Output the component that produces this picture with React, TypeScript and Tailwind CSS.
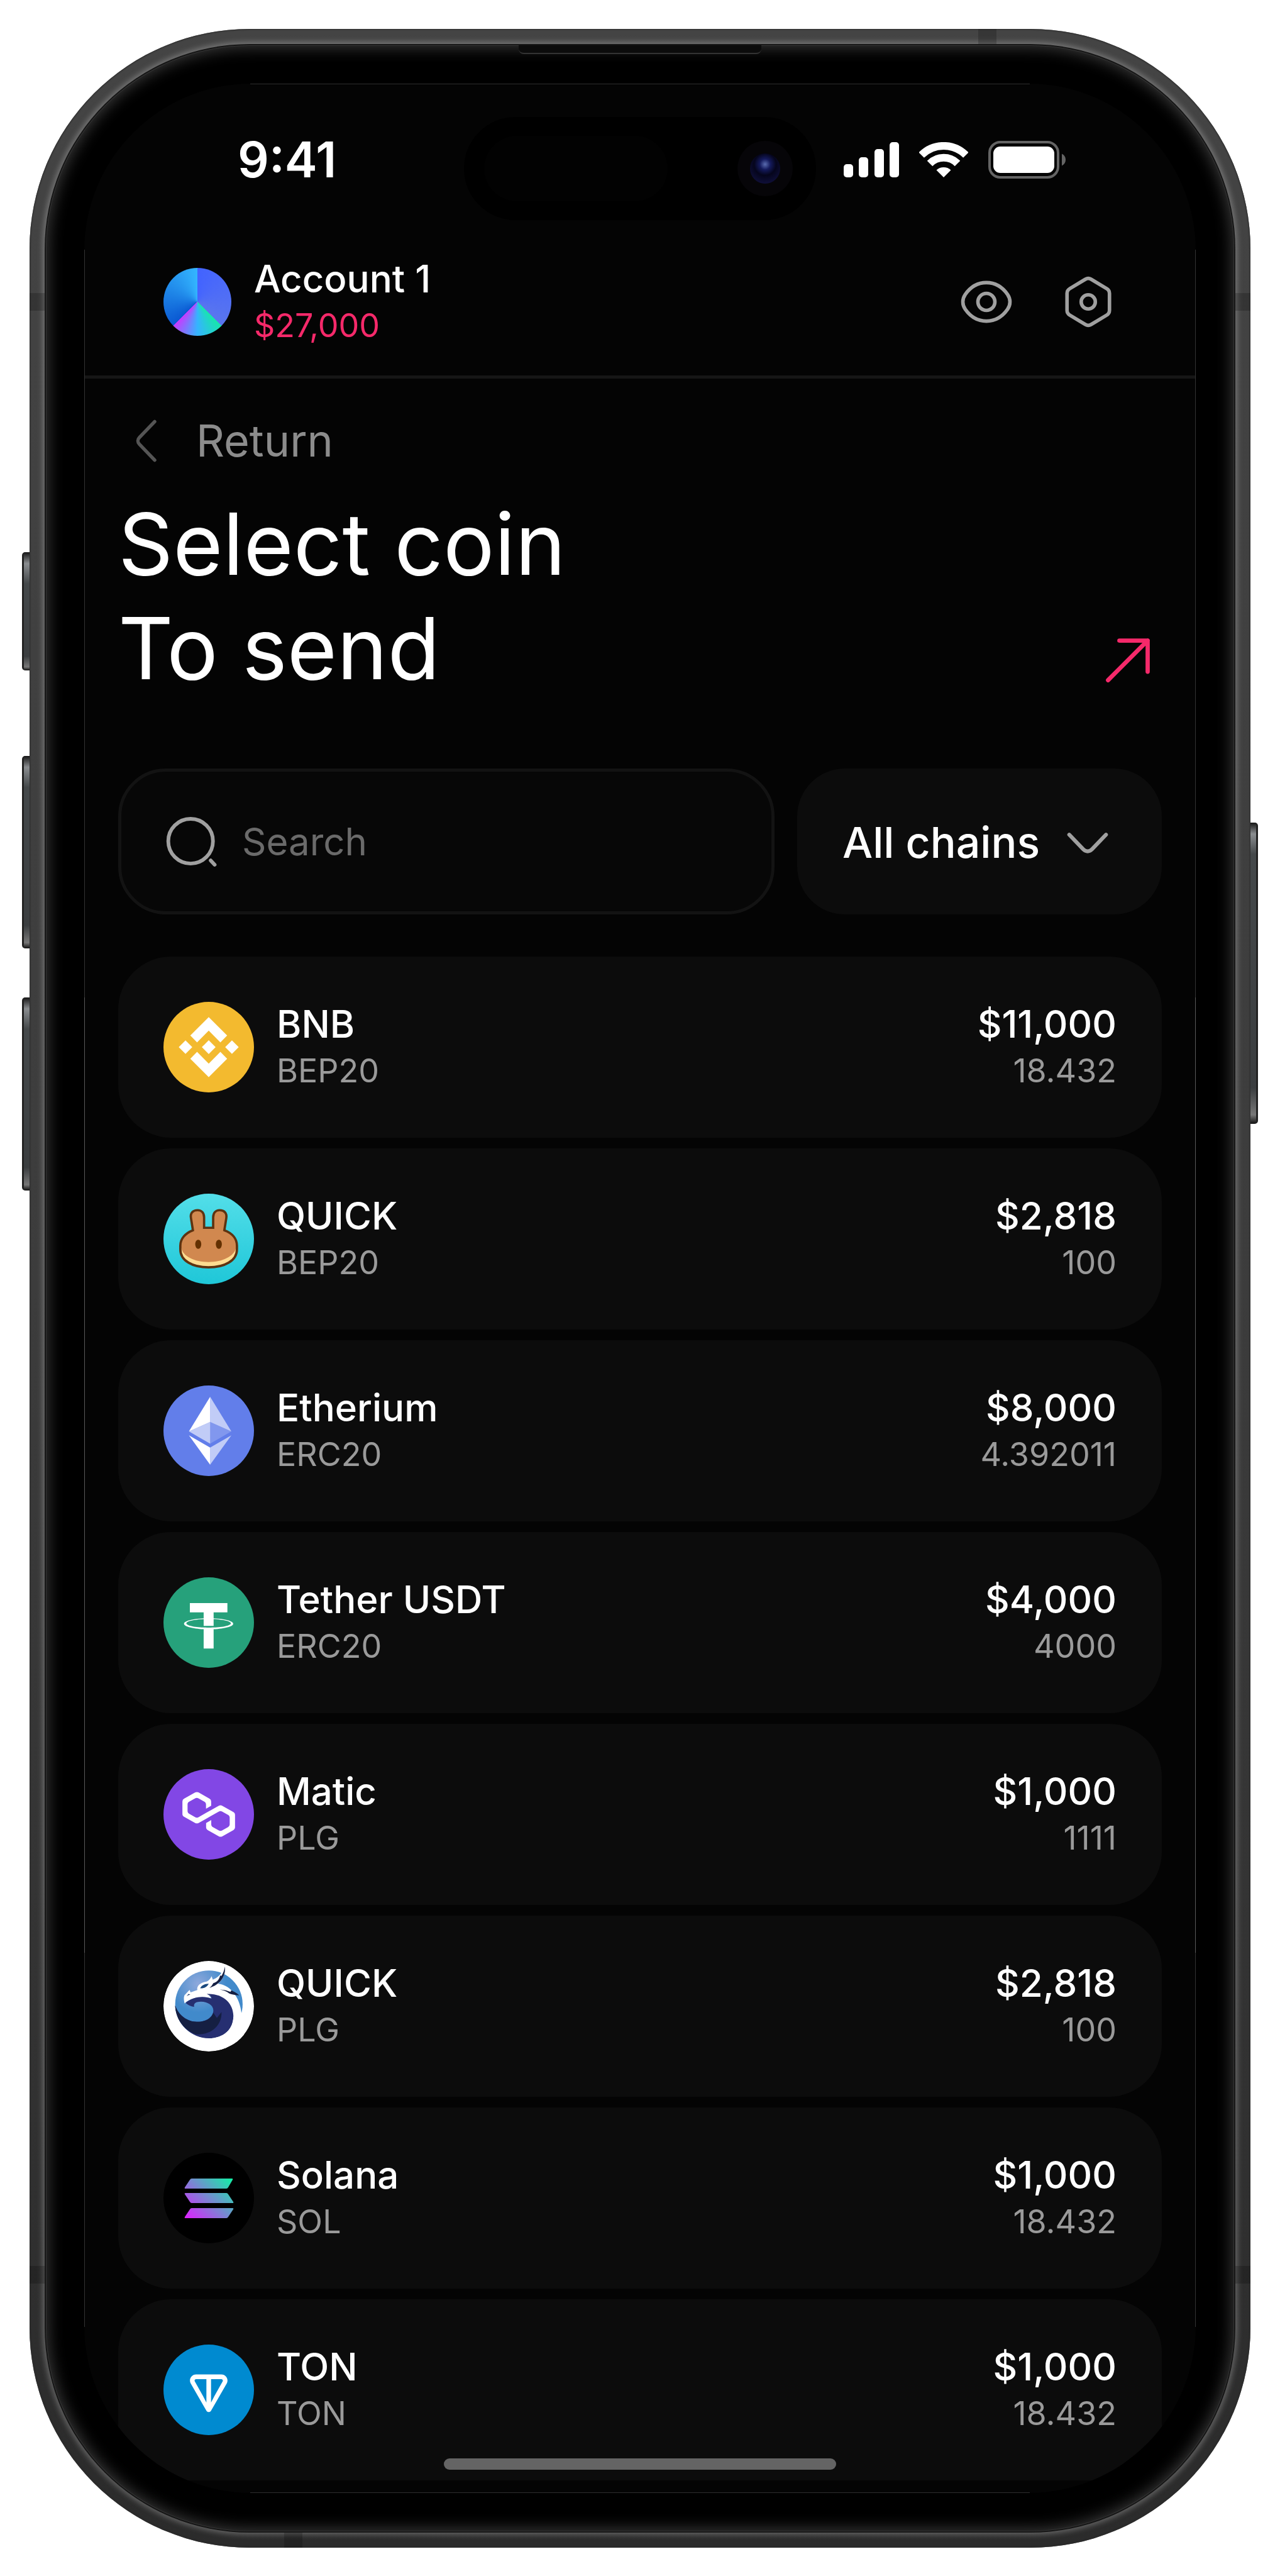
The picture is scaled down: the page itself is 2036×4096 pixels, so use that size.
import type { ReactNode } from "react"

type Coin = {
  name: string
  network: string
  value: string
  amount: string
  logo: ReactNode
}

function BnbLogo() {
  return (
    <svg viewBox="0 0 32 32" className="size-full" aria-hidden>
      <circle cx="16" cy="16" r="16" fill="#f3ba2f" />
      <path
        transform="translate(-.96 -.96) scale(1.06)"
        fill="#fff"
        d="M12.116 14.404L16 10.52l3.886 3.886 2.26-2.26L16 6l-6.144 6.144 2.26 2.26zM6 16l2.26-2.26L10.52 16l-2.26 2.26L6 16zm6.116 1.596L16 21.48l3.886-3.886 2.26 2.259L16 26l-6.144-6.144-.003-.003 2.263-2.257zM21.48 16l2.26-2.26L26 16l-2.26 2.26L21.48 16zm-3.188-.002h.002V16L16 18.294l-2.291-2.29-.004-.004.004-.003.401-.402.195-.195L16 13.706l2.293 2.293z"
      />
    </svg>
  )
}

function PancakeLogo() {
  return (
    <svg viewBox="51 42 510 510" className="size-full" aria-hidden>
      <defs>
        <linearGradient id="pancake-bg" x1="0" y1="0" x2="0" y2="1">
          <stop offset="0" stopColor="#53dee9" />
          <stop offset="1" stopColor="#1fc7d8" />
        </linearGradient>
      </defs>
      <circle cx="306" cy="297" r="255" fill="url(#pancake-bg)" />
      <path
        d="M217 248 L206 180 C200 148 220 135 243 135 C267 135 280 152 280 176 L280 234 L331 234 L331 176 C331 152 344 135 368 135 C392 135 410 150 405 180 L394 248 C438 264 465 295 465 335 L465 355 C465 420 395 457 305 457 C215 457 146 420 146 355 L146 335 C146 295 175 264 217 248Z"
        fill="#d1884f"
      />
      <path d="M150 345 C160 395 225 427 305 427 C385 427 450 395 461 345 L461 360 C457 416 393 453 305 453 C217 453 153 416 150 360Z" fill="#fedc90" />
      <path
        d="M217 248 L206 180 C200 148 220 135 243 135 C267 135 280 152 280 176 L280 234 L331 234 L331 176 C331 152 344 135 368 135 C392 135 410 150 405 180 L394 248 C438 264 465 295 465 335 L465 355 C465 420 395 457 305 457 C215 457 146 420 146 355 L146 335 C146 295 175 264 217 248Z"
        fill="none"
        stroke="#5f3310"
        strokeWidth="13"
      />
      <ellipse cx="247" cy="327" rx="17" ry="26" fill="#633001" />
      <ellipse cx="363" cy="327" rx="17" ry="26" fill="#633001" />
    </svg>
  )
}

function EthLogo() {
  return (
    <svg viewBox="0 0 32 32" className="size-full" aria-hidden>
      <circle cx="16" cy="16" r="16" fill="#627eea" />
      <g fill="#fff">
        <path fillOpacity=".602" d="M16.498 4v8.87l7.497 3.35z" />
        <path d="M16.498 4L9 16.22l7.498-3.35z" />
        <path fillOpacity=".602" d="M16.498 21.968v6.027L24 17.616z" />
        <path d="M16.498 27.995v-6.028L9 17.616z" />
        <path fillOpacity=".2" d="M16.498 20.573l7.497-4.353-7.497-3.348z" />
        <path fillOpacity=".602" d="M9 16.22l7.498 4.353v-7.701z" />
      </g>
    </svg>
  )
}

function TetherLogo() {
  return (
    <svg viewBox="0 0 32 32" className="size-full" aria-hidden>
      <circle cx="16" cy="16" r="16" fill="#26a17b" />
      <path
        transform="translate(1.6 2.1) scale(.9)"
        fill="#fff"
        d="M17.922 17.383v-.002c-.11.008-.677.042-1.942.042-1.01 0-1.721-.03-1.971-.042v.003c-3.888-.171-6.79-.848-6.79-1.658 0-.809 2.902-1.486 6.79-1.66v2.644c.254.018.982.061 1.988.061 1.207 0 1.812-.05 1.925-.06v-2.643c3.88.173 6.775.85 6.775 1.658 0 .81-2.895 1.485-6.775 1.657m0-3.59v-2.366h5.414V7.819H8.595v3.608h5.414v2.365c-4.4.202-7.709 1.074-7.709 2.118 0 1.044 3.309 1.915 7.709 2.116v7.582h3.913v-7.584c4.393-.202 7.694-1.073 7.694-2.116 0-1.043-3.301-1.914-7.694-2.117"
      />
    </svg>
  )
}

function MaticLogo() {
  return (
    <svg viewBox="0 0 32 32" className="size-full" aria-hidden>
      <circle cx="16" cy="16" r="16" fill="#8247e5" />
      <path
        transform="translate(1.12 1.12) scale(.93)"
        fill="#fff"
        d="M21.092 12.693c-.369-.215-.848-.215-1.254 0l-2.879 1.654-1.955 1.078-2.879 1.653c-.369.216-.848.216-1.254 0l-2.288-1.294c-.369-.215-.627-.61-.627-1.042V12.19c0-.431.221-.826.627-1.042l2.25-1.258c.37-.216.85-.216 1.256 0l2.25 1.258c.37.216.628.611.628 1.042v1.654l1.955-1.115v-1.653a1.16 1.16 0 00-.627-1.042l-4.17-2.372c-.369-.216-.848-.216-1.254 0l-4.244 2.372A1.16 1.16 0 006 11.076v4.78c0 .432.221.827.627 1.043l4.244 2.372c.369.215.849.215 1.254 0l2.879-1.618 1.955-1.114 2.879-1.617c.369-.216.848-.216 1.254 0l2.251 1.258c.37.215.627.61.627 1.042v2.552c0 .431-.22.826-.627 1.042l-2.25 1.294c-.37.216-.85.216-1.255 0l-2.251-1.258c-.37-.216-.628-.611-.628-1.042v-1.654l-1.955 1.115v1.653c0 .431.221.827.627 1.042l4.244 2.372c.369.216.848.216 1.254 0l4.244-2.372c.369-.215.627-.61.627-1.042v-4.78a1.16 1.16 0 00-.627-1.042l-4.28-2.409z"
      />
    </svg>
  )
}

function QuickLogo() {
  return (
    <svg viewBox="81 104 510 510" className="size-full" aria-hidden>
      <defs>
        <radialGradient id="quick-shine" cx=".34" cy=".2" r=".42">
          <stop offset="0" stopColor="#8fa9dc" />
          <stop offset="1" stopColor="#418acb" />
        </radialGradient>
        <clipPath id="quick-disc">
          <circle cx="336" cy="359" r="255" />
        </clipPath>
      </defs>
      <g clipPath="url(#quick-disc)">
        <circle cx="336" cy="359" r="255" fill="#fff" />
        <circle cx="337" cy="348" r="190" fill="url(#quick-shine)" />
        {/* white dragon body, head and horn */}
        <path
          fill="#fff"
          d="M200 343 C196 325 194 312 199 298 L228 267 L234 281 L272 268 C266 245 290 225 325 220 C338 214 346 204 352 190 L359 209 C385 200 404 185 427 136 C432 180 410 215 388 232 C450 236 512 300 521 402 L560 450 L520 560 L400 600 L330 560 L475 415 L330 290 L352 316 C310 300 240 305 200 343Z"
        />
        <path
          fill="#262f71"
          d="M206 340 C250 302 310 300 352 316 C350 304 342 296 324 290 C420 285 475 345 475 415 C475 490 420 540 337 540 C240 540 150 460 147 355 C165 410 215 447 268 447 C330 447 362 415 362 382 C362 345 310 325 270 336 C256 341 250 350 255 362 C235 360 215 350 206 340Z"
        />
        <path fill="#fff" d="M475 415 C475 490 420 540 337 540 L337 560 L420 560 L500 490Z" />
        <path fill="#151f42" d="M147 355 C165 410 215 447 268 447 C325 447 352 425 362 395 L382 425 L408 392 C412 470 345 525 262 517 C195 492 150 430 147 355Z" />
        <path fill="#151f42" d="M427 136 C434 190 400 238 340 256 C352 246 356 240 362 229 C385 222 396 206 400 186 L408 188 C418 172 424 155 427 136Z" />
        <path fill="#19477d" d="M288 258 C292 244 312 232 336 232 C328 248 310 260 288 258Z" />
        <path fill="#151f42" d="M398 265 C425 266 440 272 458 278 L464 270 C480 278 492 284 508 298 C480 296 455 292 442 280 C428 272 414 268 398 265Z" />
        <path fill="#1d3c70" d="M211 303 L222 290 L233 294 C224 294 218 298 211 303Z" />
      </g>
    </svg>
  )
}

function SolanaLogo() {
  return (
    <svg viewBox="0 0 144 144" className="size-full" aria-hidden>
      <defs>
        <linearGradient id="sol" gradientUnits="userSpaceOnUse" x1="38" y1="108" x2="106" y2="38">
          <stop offset="0" stopColor="#e01fff" />
          <stop offset="1" stopColor="#12f0a6" />
        </linearGradient>
      </defs>
      <circle cx="72" cy="72" r="72" fill="#000" />
      <g fill="url(#sol)">
        <path d="M45 41h64q2 0 1 2l-7 12q-1 2-3 2H35q-2 0-1-2l8-12q1-2 3-2z" />
        <path d="M35 64h65q2 0 3 2l8 12q1 2-1 2H45q-2 0-3-2l-8-12q-1-2 1-2z" />
        <path d="M45 88h65q2 0 1 2l-8 12q-1 2-3 2H35q-2 0-1-2l8-12q1-2 3-2z" />
      </g>
    </svg>
  )
}

function TonLogo() {
  return (
    <svg viewBox="0 0 56 56" className="size-full" aria-hidden>
      <circle cx="28" cy="28" r="28" fill="#008ad0" />
      <path
        transform="translate(5.04 5.7) scale(.82)"
        fill="#fff"
        d="M37.56 15.63H18.44C14.92 15.63 12.7 19.42 14.46 22.48L26.26 42.94C27.03 44.28 28.97 44.28 29.74 42.94L41.55 22.48C43.31 19.43 41.08 15.63 37.57 15.63H37.56ZM26.25 36.81L23.68 31.83L17.48 20.74C17.07 20.03 17.57 19.12 18.44 19.12H26.25V36.81ZM38.52 20.74L32.32 31.84L29.75 36.81V19.12H37.56C38.43 19.12 38.93 20.03 38.52 20.74Z"
      />
    </svg>
  )
}

const coins: Coin[] = [
  { name: "BNB", network: "BEP20", value: "$11,000", amount: "18.432", logo: <BnbLogo /> },
  { name: "QUICK", network: "BEP20", value: "$2,818", amount: "100", logo: <PancakeLogo /> },
  { name: "Etherium", network: "ERC20", value: "$8,000", amount: "4.392011", logo: <EthLogo /> },
  { name: "Tether USDT", network: "ERC20", value: "$4,000", amount: "4000", logo: <TetherLogo /> },
  { name: "Matic", network: "PLG", value: "$1,000", amount: "1111", logo: <MaticLogo /> },
  { name: "QUICK", network: "PLG", value: "$2,818", amount: "100", logo: <QuickLogo /> },
  { name: "Solana", network: "SOL", value: "$1,000", amount: "18.432", logo: <SolanaLogo /> },
  { name: "TON", network: "TON", value: "$1,000", amount: "18.432", logo: <TonLogo /> },
]

function StatusBar() {
  return (
    <div className="flex h-[230px] items-center justify-between pt-[12px] pr-[206px] pl-[244px]">
      <span className="text-[78px] leading-[90px] font-semibold">9:41</span>
      <div className="flex items-center gap-[32px]">
        <svg viewBox="0 0 88 56" className="h-[56px] w-[88px]" fill="#fff" aria-hidden>
          <rect x="0" y="35" width="15" height="21" rx="5" />
          <rect x="24" y="24" width="15" height="32" rx="5" />
          <rect x="49" y="11" width="15" height="45" rx="5" />
          <rect x="73" y="0" width="15" height="56" rx="5" />
        </svg>
        <svg viewBox="0 0 78 56" className="h-[56px] w-[78px]" fill="none" stroke="#fff" strokeWidth="12" aria-hidden>
          <path d="M3.6 20.6A50 50 0 0 1 74.4 20.6" />
          <path d="M17 34A31 31 0 0 1 61 34" />
          <path d="M39 56L27.5 44.5A17 17 0 0 1 50.5 44.5Z" fill="#fff" stroke="none" />
        </svg>
        <svg viewBox="0 0 124 60" className="h-[60px] w-[124px]" aria-hidden>
          <rect x="2" y="2" width="109" height="56" rx="17" fill="none" stroke="#646464" strokeWidth="4" />
          <rect x="8" y="9" width="97" height="42" rx="11" fill="#fff" />
          <path d="M117 20.500c4 2 6 5.500 6 9.500s-2 7.500-6 9.500z" fill="#646464" />
        </svg>
      </div>
    </div>
  )
}

function DynamicIsland() {
  return (
    <div className="absolute top-[53px] left-1/2 flex h-[164px] w-[560px] -translate-x-1/2 items-center justify-between rounded-full bg-black pr-[37px] pl-[32px]">
      <div className="h-[104px] w-[292px] rounded-full bg-[#020202]" />
      <div className="flex size-[88px] items-center justify-center rounded-full bg-[#060508]">
        <div className="size-[48px] rounded-full bg-[radial-gradient(circle_at_50%_36%,#5a6cb0_0,#141a5c_22%,#05051c_45%,#0e0e36_75%,#15154a_100%)]" />
      </div>
    </div>
  )
}

function AccountHeader() {
  return (
    <header className="flex items-center justify-between border-b-[5px] border-[#161616] py-[42px] pr-[117px] pl-[126px]">
      <div className="flex items-center gap-[36px]">
        <div className="size-[108px] rounded-full bg-[conic-gradient(#4263ff_0deg,#5a76ee_135deg,#17e6ac_135deg,#35b4ff_180deg,#c63bff_225deg,#0a58d2_225deg,#34b6ff_360deg)]" />
        <div>
          <div className="text-[60px] leading-[76px] font-medium">Account 1</div>
          <div className="text-[52px] leading-[74px] text-[#f5296a]">$27,000</div>
        </div>
      </div>
      <div className="flex gap-[54px]">
        <button type="button" aria-label="Hide balance" className="size-[108px]">
          <svg viewBox="0 0 24 24" fill="none" stroke="#a0a0a0" strokeWidth="1.25" aria-hidden>
            <path d="M12 5.200c3.400 0 5.900 1.900 7.500 4.200 1.100 1.600 1.100 3.600 0 5.200-1.600 2.300-4.100 4.200-7.500 4.200s-5.900-1.900-7.500-4.200c-1.100-1.600-1.100-3.600 0-5.200C6.100 7.100 8.600 5.200 12 5.200z" />
            <circle cx="12" cy="12" r="3" />
          </svg>
        </button>
        <button type="button" aria-label="Settings" className="size-[108px]">
          <svg viewBox="0 0 24 24" fill="none" stroke="#a0a0a0" strokeWidth="1.25" strokeLinejoin="round" aria-hidden>
            <path d="M11 4a2 2 0 0 1 2 0l5.500 3.300a2 2 0 0 1 1 1.700v6a2 2 0 0 1-1 1.700L13 20a2 2 0 0 1-2 0l-5.500-3.300a2 2 0 0 1-1-1.700V9a2 2 0 0 1 1-1.700z" />
            <circle cx="12" cy="12" r="2.500" />
          </svg>
        </button>
      </div>
    </header>
  )
}

function Filters() {
  return (
    <div className="mt-[108px] flex gap-[36px]">
      <div className="flex h-[232px] min-w-0 flex-1 items-center gap-[26px] rounded-[76px] border-[5px] border-[#131313] bg-[#070707] pr-[54px] pl-[58px]">
        <svg viewBox="0 0 24 24" className="size-[108px] shrink-0" fill="none" stroke="#a0a0a0" strokeWidth="1.3" strokeLinecap="round" aria-hidden>
          <circle cx="11.6" cy="11.9" r="7.900" />
          <path d="M18.700 18.700l1.400 1.500" />
        </svg>
        <input
          type="text"
          aria-label="Search coins"
          placeholder="Search"
          className="h-[90px] min-w-0 flex-1 bg-transparent text-[60px] outline-none placeholder:text-[#6a6a6a]"
        />
      </div>
      <div className="flex h-[232px] w-[580px] items-center rounded-[76px] bg-[#0c0c0c] pr-[64px] pl-[72px]">
        <select aria-label="Chain" className="h-[100px] min-w-0 flex-1 appearance-none bg-transparent text-[68px] font-medium outline-none">
          <option>All chains</option>
        </select>
        <svg viewBox="0 0 24 24" className="size-[108px] shrink-0" fill="none" stroke="#a0a0a0" strokeWidth="1.35" strokeLinecap="round" aria-hidden>
          <path d="M5.500 9.600l5 5.200c.8.900 2.200.9 3 0l5-5.200" />
        </svg>
      </div>
    </div>
  )
}

function CoinRow({ coin }: { coin: Coin }) {
  return (
    <li>
      <button type="button" className="flex h-[288px] w-full items-center gap-[36px] rounded-[84px] bg-[#0c0c0c] px-[72px]">
        <span className="size-[144px] shrink-0">{coin.logo}</span>
        <span className="flex flex-1 flex-col text-left">
          <span className="text-[60px] leading-[76px] font-medium">{coin.name}</span>
          <span className="text-[52px] leading-[74px] text-[#9a9a9a]">{coin.network}</span>
        </span>
        <span className="flex flex-col text-right">
          <span className="text-[60px] leading-[76px] font-medium">{coin.value}</span>
          <span className="text-[52px] leading-[74px] text-[#9a9a9a]">{coin.amount}</span>
        </span>
      </button>
    </li>
  )
}

// Hardware around the glass: side keys, antenna bands and the earpiece slot
function SideKeys() {
  const key = "absolute w-[16px] bg-[linear-gradient(180deg,#151515_0,#8a8d90_18px,#44484a_50px,#3a3d3f_88%,#777_97%,#111_100%)]"
  return (
    <>
      <div className={key + " top-[832px] -left-[12px] h-[188px] rounded-l-[5px] border-l-[3px] border-[#222]"} />
      <div className={key + " top-[1156px] -left-[12px] h-[306px] rounded-l-[5px] border-l-[3px] border-[#222]"} />
      <div className={key + " top-[1540px] -left-[12px] h-[307px] rounded-l-[5px] border-l-[3px] border-[#222]"} />
      <div className={key + " top-[1262px] -right-[12px] h-[479px] rounded-r-[5px] border-r-[3px] border-[#222]"} />
    </>
  )
}

function AntennaBands() {
  return (
    <>
      <div className="absolute top-[420px] left-0 h-[28px] w-[24px] bg-black/20" />
      <div className="absolute top-[420px] right-0 h-[28px] w-[24px] bg-black/20" />
      <div className="absolute bottom-[420px] left-0 h-[28px] w-[24px] bg-black/20" />
      <div className="absolute right-0 bottom-[420px] h-[28px] w-[24px] bg-black/20" />
      <div className="absolute top-0 right-[404px] h-[24px] w-[29px] bg-black/20" />
      <div className="absolute bottom-0 left-[405px] h-[24px] w-[29px] bg-black/20" />
    </>
  )
}

export default function App() {
  return (
    <main className="min-h-screen bg-white px-[47px] py-[46px] font-['Inter',sans-serif] text-white">
      <div className="relative">
        <SideKeys />
        <div className="relative rounded-[350px] bg-[linear-gradient(180deg,#444_0,#3c3c3c_50%,#2b2b2b_100%)] p-[26px] shadow-[inset_0_0_2px_1px_#2a2a2a]">
          <div className="relative rounded-[324px] bg-black p-[61px] shadow-[0_0_0_2px_#161616,0_0_10px_5px_rgba(255,255,255,0.28),inset_0_0_0_1px_#333,inset_0_0_24px_3px_#3c3c3c]">
            <div className="absolute top-0 left-1/2 h-[14px] w-[386px] -translate-x-1/2 rounded-b-[8px] border-b-2 border-[#333] bg-[#0c0c0c]" />
            <div className="relative overflow-hidden rounded-[266px] bg-[#040404]">
              <StatusBar />
              <DynamicIsland />
              <AccountHeader />

              <div className="px-[54px] pb-[20px]">
                <a href="#" className="mt-[54px] flex w-fit items-center gap-[34px] text-[#8c8c8c]">
                  <svg viewBox="0 0 20 20" className="size-[90px]" fill="none" stroke="#555" strokeWidth="1.2" strokeLinecap="round" aria-hidden>
                    <path d="M12.900 3.200L7.500 8.800c-.7.700-.7 1.700 0 2.400l5.400 5.600" />
                  </svg>
                  <span className="text-[70px] leading-[90px]">Return</span>
                </a>

                <div className="mt-[36px] flex items-end justify-between">
                  <h1 className="text-[136px] leading-[166px] font-normal">
                    Select coin
                    <br />
                    To send
                  </h1>
                  <svg viewBox="0 0 24 24" className="mb-[10px] size-[108px]" fill="none" stroke="#f5296a" strokeWidth="1.500" strokeLinecap="round" strokeLinejoin="round" aria-hidden>
                    <path d="M5 19L19 5M9 5h10v11" />
                  </svg>
                </div>

                <Filters />

                <ul className="mt-[67px] flex flex-col gap-[17px]">
                  {coins.map((coin, i) => (
                    <CoinRow key={i} coin={coin} />
                  ))}
                </ul>
              </div>

              <div className="absolute bottom-[37px] left-1/2 h-[18px] w-[624px] -translate-x-1/2 rounded-full bg-[#646464]" />
            </div>
            {/* hairlines along the straight edges of the display */}
            <div className="absolute inset-x-[325px] top-[61px] h-px bg-[#2e2e2e]" />
            <div className="absolute inset-x-[325px] bottom-[61px] h-px bg-[#2e2e2e]" />
            <div className="absolute inset-y-[325px] left-[61px] w-px bg-[linear-gradient(180deg,#333_36%,#5a5a5a_36%,#5a5a5a_82%,#333_82%)]" />
            <div className="absolute inset-y-[325px] right-[61px] w-px bg-[linear-gradient(180deg,#333_36%,#5a5a5a_36%,#5a5a5a_82%,#333_82%)]" />
          </div>
          <AntennaBands />
        </div>
      </div>
    </main>
  )
}
